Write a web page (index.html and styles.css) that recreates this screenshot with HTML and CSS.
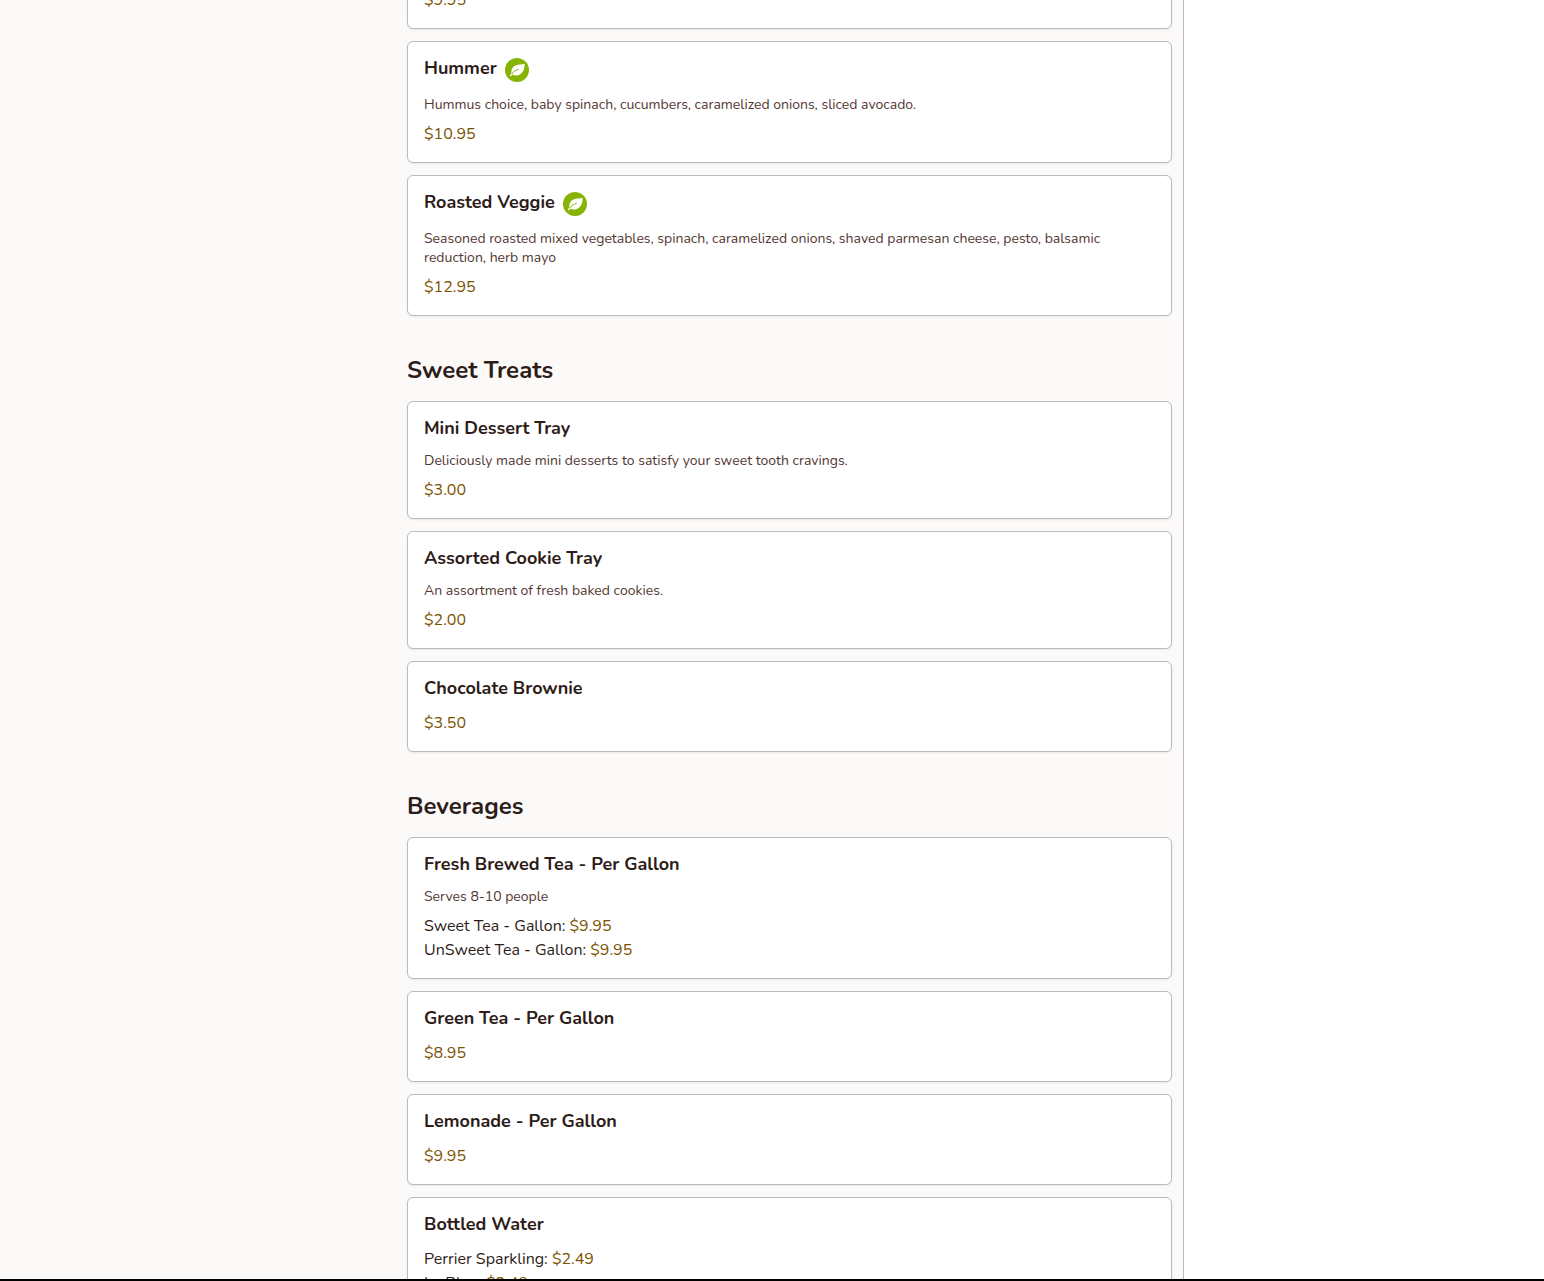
FILE: index.html
```html
<!DOCTYPE html>
<html lang="en">
<head>
    <meta charset="UTF-8">
    <meta name="viewport" content="width=device-width, initial-scale=1.0">
    <title>Menu</title>
    <link rel="stylesheet" href="styles.css">
</head>
<body>
    <svg class="sprite" aria-hidden="true">
        <symbol id="leaf" viewBox="0 0 24 24">
            <circle cx="12" cy="12" r="12" fill="#86b404"/>
            <path d="M19.600 5.800c-2.200 1-5 .3-7.800 1.200-3.400 1.100-5.600 3.700-5.400 7l-.1 1.200-1.400 2.500.9.700 1.500-1.900c1.800 1.300 4.400 1.400 6.600.5 4.100-1.700 5.900-5.800 5.700-11.200z" fill="#fff"/>
            <path d="M7 15.700c1.300-2.300 3.700-3.300 6.400-4.300" fill="none" stroke="#86b404" stroke-width="1" stroke-linecap="round"/>
        </symbol>
    </svg>

    <div class="page">
        <main class="menu">
            <section>
                <article class="item item-first">
                    <p class="price">$9.95</p>
                </article>
                <article class="item">
                    <h3>Hummer <svg class="leaf" role="img" aria-label="Vegetarian"><use href="#leaf"/></svg></h3>
                    <p class="description">Hummus choice, baby spinach, cucumbers, caramelized onions, sliced avocado.</p>
                    <p class="price">$10.95</p>
                </article>
                <article class="item">
                    <h3>Roasted Veggie <svg class="leaf" role="img" aria-label="Vegetarian"><use href="#leaf"/></svg></h3>
                    <p class="description">Seasoned roasted mixed vegetables, spinach, caramelized onions, shaved parmesan cheese, pesto, balsamic reduction, herb mayo</p>
                    <p class="price">$12.95</p>
                </article>
            </section>

            <section>
                <h2>Sweet Treats</h2>
                <article class="item">
                    <h3>Mini Dessert Tray</h3>
                    <p class="description">Deliciously made mini desserts to satisfy your sweet tooth cravings.</p>
                    <p class="price">$3.00</p>
                </article>
                <article class="item">
                    <h3>Assorted Cookie Tray</h3>
                    <p class="description">An assortment of fresh baked cookies.</p>
                    <p class="price">$2.00</p>
                </article>
                <article class="item">
                    <h3>Chocolate Brownie</h3>
                    <p class="price">$3.50</p>
                </article>
            </section>

            <section>
                <h2>Beverages</h2>
                <article class="item">
                    <h3>Fresh Brewed Tea - Per Gallon</h3>
                    <p class="description">Serves 8-10 people</p>
                    <p class="option">Sweet Tea - Gallon: <span class="price">$9.95</span></p>
                    <p class="option">UnSweet Tea - Gallon: <span class="price">$9.95</span></p>
                </article>
                <article class="item">
                    <h3>Green Tea - Per Gallon</h3>
                    <p class="price">$8.95</p>
                </article>
                <article class="item">
                    <h3>Lemonade - Per Gallon</h3>
                    <p class="price">$9.95</p>
                </article>
                <article class="item">
                    <h3>Bottled Water</h3>
                    <p class="option">Perrier Sparkling: <span class="price">$2.49</span></p>
                    <p class="option">Le Bleu: <span class="price">$2.49</span></p>
                </article>
            </section>
        </main>
        <aside class="cart"></aside>
    </div>
</body>
</html>
```

FILE: styles.css
```css
* {
    box-sizing: border-box;
}

body {
    margin: 0;
    font-family: Nunito, "Open Sans", sans-serif;
    font-size: 16px;
    line-height: 24px;
    color: #2d1c18;
    background: #fff;
}

h2, h3, p {
    margin: 0;
}

.sprite {
    display: none;
}

.page {
    display: flex;
    height: 100vh;
    overflow: hidden;
    border-bottom: 2px solid #000;
}

.menu {
    flex: 1;
    padding: 0 11px 0 407px;
    background: #fbfaf8;
    border-right: 1px solid #bbb;
}

.cart {
    width: 360px;
    background: #fff;
}

h2 {
    margin: 38px 0 15px;
    font-size: 24px;
    line-height: 32px;
    font-weight: 700;
}

.item {
    padding: 16px;
    margin-bottom: 12px;
    background: #fff;
    border: 1px solid #bbb;
    border-radius: 6px;
    box-shadow: 0 1px 2px rgba(0, 0, 0, 0.08);
}

.item:last-child {
    margin-bottom: 0;
}

/* scrolled partly out of view */
.item-first {
    margin-top: -29px;
}

h3 {
    display: flex;
    align-items: flex-start;
    gap: 8px;
    margin-bottom: 13px;
    font-size: 18px;
    line-height: 20px;
    font-weight: 700;
}

.leaf {
    width: 24px;
    height: 24px;
}

.description {
    margin-bottom: 8px;
    font-size: 14px;
    line-height: 19px;
    color: #523732;
}

.price {
    color: #7a5200;
}
```
